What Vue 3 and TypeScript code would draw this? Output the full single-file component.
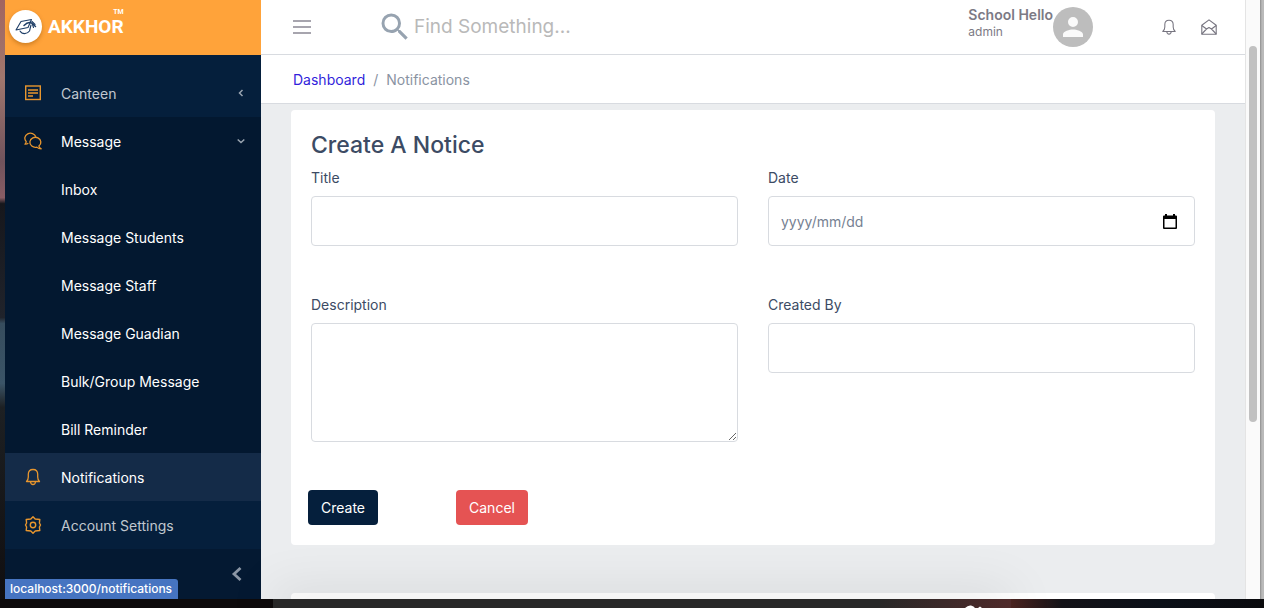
<script setup lang="ts">
import { ref } from 'vue'

const messageLinks: string[] = [
  'Inbox',
  'Message Students',
  'Message Staff',
  'Message Guadian',
  'Bulk/Group Message',
  'Bill Reminder',
]

const search = ref('')
const title = ref('')
const date = ref('')
const description = ref('')
const createdBy = ref('')

function reset(): void {
  title.value = ''
  date.value = ''
  description.value = ''
  createdBy.value = ''
}
</script>

<template>
  <div class="desktop">
    <div class="wall-left"></div>
    <div class="window">
      <aside class="sidebar">
        <a class="brand" href="#" aria-label="Akkhor home">
          <span class="brand-mark">
            <svg width="24" height="20" viewBox="0 0 24 20" fill="none" stroke="#1d3d66" stroke-width="1.1" stroke-linejoin="round" stroke-linecap="round">
              <path d="M2 13 7 4.500 17.500 2.500 14 10.500Z" />
              <path d="M6 14C8 17.500 13 17.500 15.500 14L17 8" />
              <path d="M10 8.500Q14 4.500 17.500 6L21.500 9.500" stroke-width="1.500" />
              <path d="M18.500 7.500l1 3M18 4.500l3 3" />
            </svg>
          </span>
          <span class="brand-text">
            <span class="brand-tm">TM</span>
            <span class="brand-name">AKKHOR</span>
          </span>
        </a>
        <nav class="menu">
          <a class="item" href="#">
            <svg class="item-icon" width="18" height="18" viewBox="0 0 18 18" fill="none" stroke="currentColor" stroke-width="1.4">
              <rect x="1.700" y="2" width="14.600" height="13.500" />
              <path d="M4 6h10M4 9h10M4 12h5" stroke-width="1.500" />
            </svg>
            <span>Canteen</span>
            <svg class="caret" width="8" height="8" viewBox="0 0 8 8" fill="none" stroke="currentColor" stroke-width="1.500"><path d="M5.500 1 2.500 4l3 3" /></svg>
          </a>
          <div class="group">
            <a class="item open" href="#">
              <svg class="item-icon" width="18" height="18" viewBox="0 0 18 18" fill="none" stroke="currentColor" stroke-width="1.300" stroke-linejoin="round">
                <path d="M11.800 4.800A5.600 5 0 1 0 2.200 9.500Q2.200 11 1 12.200Q3 12.300 4.300 11.200" />
                <path d="M14.900 14.100A5.500 5 0 1 0 12.800 15.100Q14.600 16.800 17.200 16.800Q15.200 15.700 14.900 14.100Z" />
              </svg>
              <span>Message</span>
              <svg class="caret" width="8" height="8" viewBox="0 0 8 8" fill="none" stroke="currentColor" stroke-width="1.500"><path d="M.7 2.500 4 5.500l3.300-3" /></svg>
            </a>
            <a v-for="link in messageLinks" :key="link" class="item sub" href="#">{{ link }}</a>
          </div>
          <a class="item current" href="#" aria-current="page">
            <svg class="item-icon" width="18" height="18" viewBox="0 0 18 18" fill="none" stroke="currentColor" stroke-width="1.300" stroke-linejoin="round">
              <path d="M2.500 13.500Q4.300 12 4.300 9V6.300Q4.300 1.500 9 1.500T13.700 6.300V9Q13.700 12 15.500 13.500Z" />
              <path d="M6.500 13.700Q6.800 16.500 9 16.500T11.500 13.700" />
            </svg>
            <span>Notifications</span>
          </a>
          <a class="item" href="#">
            <svg class="item-icon" width="18" height="18" viewBox="0 0 18 18" fill="none" stroke="currentColor" stroke-width="1.400" stroke-linejoin="round">
              <path d="M9 .8 11.200 3 15.800 3.500 15.400 7 16.500 9 15.400 11 15.800 14.500 11.200 15 9 17.200 6.800 15 2.200 14.500 2.600 11 1.500 9 2.600 7 2.200 3.500 6.800 3Z" />
              <circle cx="9" cy="9" r="2.700" />
            </svg>
            <span>Account Settings</span>
          </a>
        </nav>
        <button class="collapse" type="button" aria-label="Collapse sidebar">
          <svg width="12" height="16" viewBox="0 0 12 16" fill="none" stroke="currentColor" stroke-width="2.800"><path d="M9.500 2 3 8l6.500 6" /></svg>
        </button>
      </aside>

      <main class="main">
        <header class="topbar">
          <button class="icon-button" type="button" aria-label="Toggle menu">
            <svg width="18" height="16" viewBox="0 0 18 16" stroke="#8a8894" stroke-width="1.500"><path d="M0 2h18M0 8h18M0 14h18" /></svg>
          </button>
          <label class="search">
            <svg width="36" height="36" viewBox="0 0 24 24" fill="#97a3b0"><path d="M15.500 14h-.79l-.28-.27A6.471 6.471 0 0 0 16 9.500 6.500 6.500 0 1 0 9.500 16c1.610 0 3.090-.59 4.230-1.570l.27.28v.79l5 4.990L20.490 19zm-6 0C7.010 14 5 11.990 5 9.500S7.010 5 9.500 5 14 7.010 14 9.500 11.990 14 9.500 14z" /></svg>
            <input v-model="search" type="text" placeholder="Find Something..." aria-label="Search" />
          </label>
          <div class="user">
            <div class="user-text">
              <strong>School Hello</strong>
              <span>admin</span>
            </div>
            <svg width="40" height="40" viewBox="0 0 40 40"><circle cx="20" cy="20" r="20" fill="#bdbdbd" /><path d="M20 20a5 5 0 1 0 0-10 5 5 0 0 0 0 10zm0 2.500c-3.340 0-10 1.670-10 5V30h20v-2.500c0-3.330-6.660-5-10-5z" fill="#fafafa" /></svg>
          </div>
          <button class="icon-button" type="button" aria-label="Alerts">
            <svg width="16" height="16" viewBox="0 0 18 18" fill="none" stroke="#777580" stroke-width="1.200" stroke-linejoin="round">
              <path d="M2 14Q4.300 12 4.300 9V6.300Q4.300 1.500 9 1.500T13.700 6.300V9Q13.700 12 16 14Z" />
              <path d="M6.500 14Q6.800 17 9 17T11.500 14" />
            </svg>
          </button>
          <button class="icon-button" type="button" aria-label="Mail">
            <svg width="16" height="16" viewBox="0 0 16 16" fill="none" stroke="#777580" stroke-width="1.100" stroke-linejoin="round">
              <path d="M.8 6.200 8 .9l7.200 5.300v9H.8Z" />
              <path d="M.8 6.500 5.500 10 8 8.500l2.500 1.500 4.700-3.500M.8 15l4.700-5M15.200 15l-4.700-5" />
            </svg>
          </button>
        </header>
        <nav class="breadcrumb" aria-label="Breadcrumb">
          <a href="#">Dashboard</a>
          <span>/</span>
          <span>Notifications</span>
        </nav>
        <div class="content">
          <form class="card" @submit.prevent @reset.prevent="reset">
            <h1>Create A Notice</h1>
            <div class="fields">
              <div class="field">
                <label for="title">Title</label>
                <input id="title" v-model="title" type="text" />
              </div>
              <div class="field">
                <label for="date">Date</label>
                <div class="date-box">
                  <input id="date" v-model="date" type="text" placeholder="yyyy/mm/dd" />
                  <button class="icon-button" type="button" aria-label="Pick a date">
                    <svg width="14" height="16" viewBox="0 0 14 16"><path d="M2 0h2v1.500h6V0h2v1.500h1q1 0 1 1V14q0 1-1 1H1q-1 0-1-1V2.500q0-1 1-1h1ZM1.500 5v8.500h11V5Z" fill="#000" fill-rule="evenodd" /></svg>
                  </button>
                </div>
              </div>
              <div class="field">
                <label for="description">Description</label>
                <textarea id="description" v-model="description"></textarea>
              </div>
              <div class="field">
                <label for="created-by">Created By</label>
                <input id="created-by" v-model="createdBy" type="text" />
              </div>
            </div>
            <div class="actions">
              <button class="btn create" type="submit">Create</button>
              <button class="btn cancel" type="reset">Cancel</button>
            </div>
          </form>
          <section class="card next"></section>
        </div>
      </main>
      <div class="scroll-track"><div class="scroll-thumb"></div></div>
      <div class="status">localhost:3000/notifications</div>
    </div>
    <div class="wall-right"></div>
    <footer class="wall-bottom">
      <div class="dock">
        <svg width="18" height="3" viewBox="0 0 18 3" fill="#fff"><path d="M0 3Q3 0 6 .5T10 3ZM13 3l2-1.500L17 3Z" /></svg>
      </div>
    </footer>
  </div>
</template>

<style>
body {
  margin: 0;
  overflow: hidden;
}
</style>

<style scoped>
* {
  box-sizing: border-box;
}

.desktop {
  display: grid;
  grid-template: minmax(0, 1fr) 9px / 5px minmax(0, 1fr) 4px;
  height: 100vh;
  overflow: hidden;
  background: #0c0a0b;
  color: #3c4b64;
  font: 14px/21px Inter, "Liberation Sans", sans-serif;
}

.wall-left {
  background: linear-gradient(#a2655f 0, #a0776e 13%, #71535c 27%, #885c64 33%, #16171c 34%, #20232b 53%, #364c5d 54%, #3b5467 64%, #1d2023 68%, #100e10 100%);
}

.wall-right {
  background: linear-gradient(90deg, #8f8f8f, #bababa 50%);
}

.window {
  position: relative;
  display: flex;
  overflow: hidden;
}

a {
  color: inherit;
  text-decoration: none;
}

button,
input,
textarea {
  font: inherit;
}

svg {
  display: block;
  flex: none;
}

.sidebar {
  display: flex;
  flex: none;
  flex-direction: column;
  width: 256px;
  background: #051f3c;
  color: #c0c7cf;
}

.brand {
  display: flex;
  flex: none;
  align-items: flex-start;
  height: 55px;
  padding: 10px 4px;
  background: #ffa33a;
  color: #fff;
  font-family: Roboto, sans-serif;
}

.brand-mark {
  display: grid;
  place-items: center;
  width: 33px;
  height: 33px;
  margin-right: 6px;
  border-radius: 50%;
  background: #fff;
  box-shadow: 0 2px 4px rgba(130, 70, 0, 0.4);
}

.brand-text {
  display: flex;
  flex-direction: column;
}

.brand-name {
  font-size: 19px;
  font-weight: 700;
  line-height: 22px;
}

.brand-tm {
  align-self: flex-end;
  font-size: 7px;
  font-weight: 700;
  line-height: 8px;
}

.brand-text {
  margin-top: -2px;
}

.menu {
  padding-top: 14px;
}

.item {
  display: flex;
  align-items: center;
  height: 48px;
  padding: 0 16px 0 19px;
}

.item-icon {
  margin-right: 19px;
  color: #e8962e;
}

.caret {
  margin-left: auto;
  color: #9aa5b1;
}

.group {
  background: #031830;
}

.open,
.sub,
.current {
  color: #fff;
}

.sub {
  padding-left: 56px;
}

.current {
  background: #142b48;
}

.collapse {
  display: flex;
  flex: 1;
  align-items: center;
  justify-content: flex-end;
  padding: 0 18px;
  border: 0;
  background: #041932;
  color: #8b96a5;
}

.main {
  display: flex;
  flex: 1;
  flex-direction: column;
  min-width: 0;
  background: #ebedef;
}

.topbar {
  display: flex;
  flex: none;
  align-items: center;
  height: 55px;
  padding: 0 28px 0 32px;
  border-bottom: 1px solid #d8dbe0;
  background: #fff;
}

.icon-button {
  flex: none;
  padding: 0;
  border: 0;
  background: none;
}

.search {
  display: flex;
  flex: 1;
  align-items: center;
  min-width: 0;
  margin-left: 66px;
}

.search input {
  flex: 1;
  min-width: 0;
  padding: 0 0 0 1px;
  border: 0;
  outline: 0;
  background: none;
  font-size: 19px;
  line-height: 28px;
}

.search input::placeholder {
  color: #b9b9b9;
  opacity: 1;
}

.user {
  display: flex;
  margin-right: 68px;
}

.user-text {
  display: flex;
  flex-direction: column;
  color: #7c7a85;
}

.user-text strong {
  font-weight: 600;
  line-height: 16px;
}

.user-text span {
  font-size: 12px;
  line-height: 18px;
}

.user + .icon-button {
  margin-right: 24px;
}

.breadcrumb {
  display: flex;
  flex: none;
  gap: 8px;
  padding: 14px 32px 13px;
  border-bottom: 1px solid #d8dbe0;
  background: #fff;
  color: #8a93a2;
}

.breadcrumb a {
  color: #321fdb;
}

.content {
  padding: 6px 30px 0;
}

.card {
  padding: 20px;
  border-radius: 4px;
  background: #fff;
}

.next {
  height: 240px;
  margin-top: 48px;
}

h1 {
  margin: 0 0 6px;
  font-size: 23px;
  font-weight: 500;
  line-height: 31px;
}

.fields {
  display: grid;
  grid-template-columns: repeat(2, minmax(0, 1fr));
  gap: 48px 30px;
}

.field label {
  display: block;
  margin-bottom: 8px;
}

.field input,
.field textarea {
  display: block;
  width: 100%;
  height: 50px;
  padding: 6px 12px;
  border: 1px solid #d8dbe0;
  border-radius: 4px;
  background: #fff;
  color: #768192;
}

.field textarea {
  height: 119px;
  resize: vertical;
}

.field input::placeholder {
  color: #768192;
  opacity: 1;
}

.date-box {
  position: relative;
}

.date-box .icon-button {
  position: absolute;
  top: 18px;
  right: 18px;
}

.actions {
  display: flex;
  gap: 78px;
  margin: 48px 0 0 -3px;
}

.btn {
  padding: 6px 12px;
  border: 1px solid transparent;
  border-radius: 4px;
  color: #fff;
}

.create {
  background: #051f3c;
}

.cancel {
  background: #e55353;
}

.scroll-track {
  flex: none;
  width: 15px;
  padding: 46px 3px 0;
  border-left: 1px solid #e4e4e4;
  background: #fafafa;
}

.scroll-thumb {
  width: 8px;
  height: 68%;
  border-radius: 4px;
  background: #c1c1c1;
}

.status {
  position: absolute;
  bottom: 0;
  left: 0;
  z-index: 3;
  padding: 0 6px 0 5px;
  border-radius: 0 3px 0 0;
  background: #4674c1;
  color: #fff;
  font-size: 12px;
  font-weight: 500;
  line-height: 20px;
}

.wall-bottom {
  position: relative;
  grid-column: 1 / -1;
  padding: 0 20% 0 273px;
  background: linear-gradient(90deg, #0d0a0b 70%, #4b2420 80%, #141318 84%, #0b1018 92%, #0a0a0d);
}

.dock {
  display: flex;
  align-items: flex-end;
  justify-content: flex-end;
  height: 9px;
  padding-right: 28px;
  background: linear-gradient(90deg, #282828 82%, #4f2a2a);
  box-shadow: 0 0 50px rgba(0, 0, 0, 0.3);
}
</style>
